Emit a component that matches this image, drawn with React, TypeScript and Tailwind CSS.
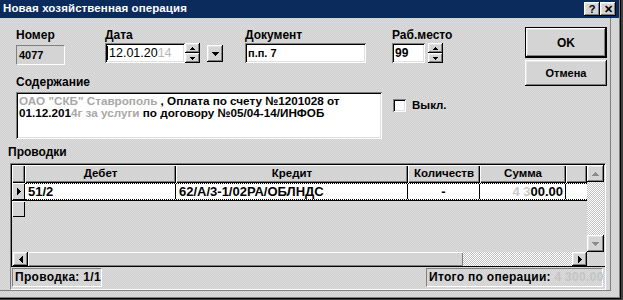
import React from "react";

const raised =
  "shadow-[inset_-1px_-1px_#000000,inset_1px_1px_#ffffff,inset_-2px_-2px_#808080,inset_2px_2px_#e4e4e4]";
const sunken =
  "shadow-[inset_1px_1px_#808080,inset_-1px_-1px_#ffffff,inset_2px_2px_#000000,inset_-2px_-2px_#e0e0e0]";
const dither =
  "bg-[image:repeating-conic-gradient(#ffffff_0_25%,#c4c4c4_0_50%)] bg-[length:2px_2px]";
const bgDither =
  "bg-[image:repeating-conic-gradient(#d0d0d0_0_25%,#dcdcdc_0_50%)] bg-[length:2px_2px]";

type Dir = "up" | "down" | "left" | "right";

function Tri({ dir, size = 4, color = "#000" }: { dir: Dir; size?: number; color?: string }) {
  const rects: React.ReactElement[] = [];
  const w = size * 2 - 1;
  for (let i = 0; i < size; i++) {
    const len = i * 2 + 1;
    const off = size - 1 - i;
    if (dir === "up") rects.push(<rect key={i} x={off} y={i} width={len} height={1} />);
    if (dir === "down") rects.push(<rect key={i} x={off} y={size - 1 - i} width={len} height={1} />);
    if (dir === "left") rects.push(<rect key={i} x={i} y={off} width={1} height={len} />);
    if (dir === "right") rects.push(<rect key={i} x={size - 1 - i} y={off} width={1} height={len} />);
  }
  const horiz = dir === "up" || dir === "down";
  return (
    <svg width={horiz ? w : size} height={horiz ? size : w} fill={color} shapeRendering="crispEdges">
      {rects}
    </svg>
  );
}

function Spinner({ w = 15 }: { w?: number }) {
  return (
    <div className="flex flex-col h-[20px]" style={{ width: w }}>
      <div className={`flex-1 flex items-center justify-center bg-[#d4d4d4] ${raised}`}>
        <Tri dir="up" size={3} />
      </div>
      <div className={`flex-1 flex items-center justify-center bg-[#d4d4d4] ${raised}`}>
        <Tri dir="down" size={3} />
      </div>
    </div>
  );
}

function Label({ children, className = "" }: { children: React.ReactNode; className?: string }) {
  return <div className={`h-[13px] leading-[13px] text-[12px] ${className}`}>{children}</div>;
}

export default function App() {
  return (
    <div className="w-[623px] h-[300px] bg-[#404040] overflow-hidden font-['Liberation_Sans',Arial,sans-serif] text-[11px] font-bold text-black">
      <div className={`w-[621px] h-[299px] ${bgDither} shadow-[inset_-1px_-1px_#000000,inset_-2px_-2px_#808080]`}>
        {/* Title bar */}
        <div className="w-[619px] h-[18px] bg-[#0b2b5c] flex items-center justify-between pl-[3px] pr-[3px]">
          <span className="text-white text-[11.5px] tracking-[0.1px]">Новая хозяйственная операция</span>
          <div className="flex">
            <div className={`w-[16px] h-[14px] bg-[#d4d4d4] ${raised} flex items-center justify-center text-[11px] leading-none`}>?</div>
            <div className={`w-[16px] h-[14px] bg-[#d4d4d4] ${raised} flex items-center justify-center text-[11px] leading-none`}>✕</div>
          </div>
        </div>

        {/* Client panel */}
        <div className="w-[611px] h-[273px] border-r border-b border-[#808080]">
          {/* Top section */}
          <div className="flex">
            <div className="w-[525px] pl-[16px] pt-[11px]">
              <div className="flex items-start">
                <div className="w-[49px]">
                  <Label>Номер</Label>
                  <div className="mt-[3px] h-[20px] border-t border-l border-[#808080] border-r-white border-b-white border-r border-b bg-[#d4d4d4] pl-[2px] leading-[18px]">
                    4077
                  </div>
                </div>
                <div className="ml-[40px]">
                  <Label>Дата</Label>
                  <div className="flex items-start mt-[1px]">
                    <div className={`w-[80px] h-[20px] bg-white ${sunken} pl-[2px] leading-[20px] font-normal text-[12.5px]`}>
                      <span className="border-l border-black pl-[1px]">12.01.20</span>
                      <span className="text-[#b8b8b8]">14</span>
                    </div>
                    <Spinner w={15} />
                    <div className={`ml-[7px] mt-[2px] w-[16px] h-[17px] bg-[#d4d4d4] ${raised} flex items-center justify-center`}>
                      <Tri dir="down" size={4} />
                    </div>
                  </div>
                </div>
                <div className="ml-[22px]">
                  <Label>Документ</Label>
                  <div className={`mt-[1px] w-[121px] h-[20px] bg-white ${sunken} pl-[3px] leading-[20px]`}>п.п. 7</div>
                </div>
                <div className="ml-[26px]">
                  <Label>Раб.место</Label>
                  <div className="flex items-start mt-[1px]">
                    <div className={`w-[33px] h-[20px] bg-white ${sunken} pl-[3px] leading-[20px] text-[12px]`}>99</div>
                    <div className="ml-[3px]">
                      <Spinner w={15} />
                    </div>
                  </div>
                </div>
              </div>

              <Label className="mt-[11px]">Содержание</Label>
              <div className="flex items-start mt-[3px]">
                <div className={`w-[366px] h-[47px] bg-white ${sunken} pl-[3px] pt-[3px] leading-[12px] text-[11.7px]`}>
                  <div className="whitespace-nowrap">
                    <span className="text-[#a8a8a8]">ОАО "СКБ" Ставрополь</span> , Оплата по счету №1201028 от
                  </div>
                  <div className="whitespace-nowrap">
                    01.12.201<span className="text-[#a8a8a8]">4г за услуги</span> по договору №05/04-14/ИНФОБ
                  </div>
                </div>
                <div className="flex items-center ml-[11px] mt-[5px]">
                  <div className={`w-[13px] h-[13px] bg-white ${sunken}`} />
                  <span className="ml-[6px] text-[11.5px]">Выкл.</span>
                </div>
              </div>
            </div>

            <div className="pt-[9px] flex flex-col">
              <div className="w-[82px] h-[31px] border border-black">
                <div className={`w-full h-full bg-[#d4d4d4] ${raised} flex items-center justify-center text-[12px]`}>OK</div>
              </div>
              <div className={`mt-[2px] w-[82px] h-[26px] bg-[#d4d4d4] ${raised} flex items-center justify-center`}>Отмена</div>
            </div>
          </div>

          <Label className="ml-[8px] mt-[7px]">Проводки</Label>

          {/* Grid + status frame */}
          <div className="ml-[10px] mt-[4px] w-[596px] h-[127px] border-l border-t border-[#808080] border-r border-b border-r-white border-b-white flex flex-col">
            <div className="flex h-[102px] border-l border-t border-black">
              <div className="w-[575px] flex flex-col">
                {/* header */}
                <div className="flex h-[18px]">
                  {[
                    { t: "", w: 13 },
                    { t: "Дебет", w: 151 },
                    { t: "Кредит", w: 232 },
                    { t: "Количеств", w: 72 },
                    { t: "Сумма", w: 86 },
                    { t: "", w: 21 },
                  ].map((c, i) => (
                    <div
                      key={i}
                      style={{ width: c.w }}
                      className="h-[18px] bg-[#d4d4d4] shadow-[inset_1px_1px_#ffffff,inset_-1px_-1px_#000000,inset_-2px_-2px_#808080] flex items-center justify-center leading-none text-[11.5px]"
                    >
                      {c.t}
                    </div>
                  ))}
                </div>
                {/* data row */}
                <div className="flex h-[18px] border-b border-black">
                  <div className="w-[13px] bg-[#d4d4d4] shadow-[inset_1px_1px_#ffffff,inset_-1px_-1px_#000000] flex items-center justify-center">
                    <Tri dir="right" size={4} />
                  </div>
                  <div className="flex flex-1 bg-white border-t border-b border-dotted border-black text-[13px]">
                    <div className="w-[151px] border-r border-black pl-[3px] leading-[15px]">51/2</div>
                    <div className="w-[232px] border-r border-black pl-[3px] leading-[15px] whitespace-nowrap">62/А/3-1/02РА/ОБЛНДС</div>
                    <div className="w-[72px] border-r border-black text-center leading-[15px]">-</div>
                    <div className="w-[86px] border-r border-black text-right pr-[2px] leading-[15px]">
                      <span className="text-[#c8c8c8]">4 3</span>00.00
                    </div>
                    <div className="flex-1" />
                  </div>
                </div>
                <div className="w-[13px] h-[16px] bg-[#d4d4d4] shadow-[inset_1px_1px_#ffffff,inset_-1px_-1px_#000000]" />
                <div className="flex-1" />
                {/* horizontal scrollbar */}
                <div className="flex h-[14px] pl-[1px]">
                  <div className={`w-[15px] bg-[#d4d4d4] ${raised} flex items-center justify-center`}>
                    <Tri dir="left" size={4} />
                  </div>
                  <div className="w-[435px] bg-[#d4d4d4] shadow-[inset_1px_1px_#ffffff,inset_-1px_-1px_#808080]" />
                  <div className={`flex-1 ${dither}`} />
                  <div className={`w-[15px] bg-[#d4d4d4] ${raised} flex items-center justify-center`}>
                    <Tri dir="right" size={4} />
                  </div>
                </div>
              </div>
              {/* vertical scrollbar */}
              <div className="w-[17px] flex flex-col">
                <div className="h-[87px] flex flex-col">
                  <div className={`h-[17px] bg-[#d4d4d4] ${raised} flex items-center justify-center`}>
                    <Tri dir="up" size={4} color="#8a8a8a" />
                  </div>
                  <div className={`flex-1 ${dither}`} />
                  <div className={`h-[17px] bg-[#d4d4d4] ${raised} flex items-center justify-center`}>
                    <Tri dir="down" size={4} color="#8a8a8a" />
                  </div>
                </div>
              </div>
            </div>
            {/* status bar */}
            <div className="border-t border-black flex justify-between items-start pl-[1px] pr-[2px] pt-[1px]">
              <div className="h-[19px] w-[90px] border-t border-l border-[#808080] border-r border-b border-r-white border-b-white pl-[2px] leading-[17px] text-[12px] tracking-[0.3px] whitespace-nowrap">
                Проводка: 1/1
              </div>
              <div className="h-[19px] w-[177px] border-t border-l border-[#808080] border-r border-b border-r-white border-b-white pl-[2px] leading-[17px] text-[12px] tracking-[0.3px] whitespace-nowrap">
                Итого по операции: <span className="text-[#c4c4c4]">4 300.00</span>
              </div>
            </div>
          </div>
        </div>
      </div>
    </div>
  );
}
